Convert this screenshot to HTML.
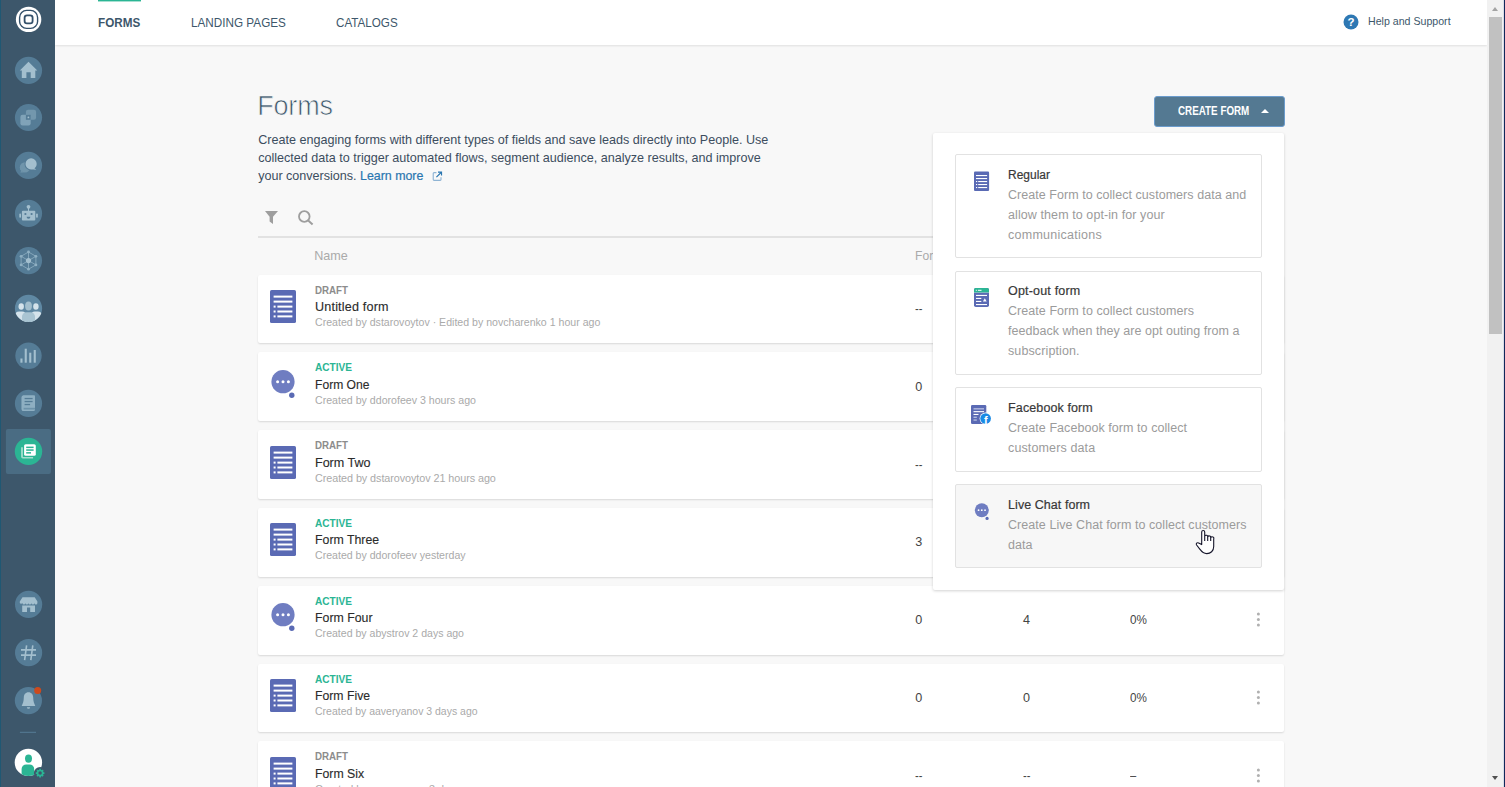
<!DOCTYPE html>
<html lang="en">
<head>
<meta charset="utf-8">
<title>Forms</title>
<style>
*{box-sizing:border-box;margin:0;padding:0}
html,body{width:1505px;height:787px;overflow:hidden;background:#f8f8f8;font-family:"Liberation Sans",sans-serif;color:#444}
body{position:relative}
.t{position:absolute;white-space:nowrap;line-height:normal;transform-origin:0 50%}
svg{position:absolute;overflow:visible}
#side{position:absolute;left:0;top:0;width:55px;height:787px;background:#3d576b;border-left:1px solid #1f5873}
#side svg{left:-1px;top:0}
#top{position:absolute;left:55px;top:0;width:1432px;height:45px;background:#fff;box-shadow:0 1px 2px rgba(0,0,0,.10)}
#tabline{position:absolute;left:43px;top:0;width:43px;height:2px;background:linear-gradient(#2bb594 0,#2bb594 50%,#a6e0d1 50%,#a6e0d1 100%)}
#sb{position:absolute;left:1487px;top:0;width:18px;height:787px;background:#f1f1f1;border-right:1px solid #11275a;box-shadow:inset -1px 0 0 #d9dce6}
#sb .th{position:absolute;left:2px;top:17px;width:13px;height:317px;background:#c1c1c1}
#sb .up,#sb .dn{position:absolute;left:4.8px;width:0;height:0;border-left:3.7px solid transparent;border-right:3.7px solid transparent}
#sb .up{top:7px;border-bottom:4px solid #a3a3a3}
#sb .dn{top:776px;border-top:4px solid #505050}
#main{position:absolute;left:0;top:0;width:1487px;height:787px}
#rule{position:absolute;left:258px;top:236px;width:1026px;height:2px;background:#e2e2e2}
.row{position:absolute;left:258px;width:1026px;height:68.7px;background:#fff;border-radius:2px;box-shadow:0 1px 2px rgba(0,0,0,.13)}
.kebab{left:996px;width:9px;height:17px}
#btn{position:absolute;left:1154px;top:96px;width:131px;height:31px;background:#547992;border:1px solid #6b9ccd;border-radius:3px}
#btn i{position:absolute;left:106px;top:11.7px;width:0;height:0;border-left:4px solid transparent;border-right:4px solid transparent;border-bottom:4px solid #fff}
#panel{position:absolute;left:933px;top:133px;width:351px;height:457px;background:#fff;border-radius:2px;box-shadow:0 1px 3px rgba(0,0,0,.18)}
.item{position:absolute;left:22px;width:307px;border:1px solid #e2e2e2;border-radius:2px;background:#fff}
.item.hov{background:#f7f7f7}
</style>
</head>
<body>
<svg width="0" height="0" style="left:-10px;top:-10px">
<defs>
<symbol id="doc" viewBox="0 0 26 33">
<rect x="0" y="0" width="26" height="33" rx="1.6" fill="#5a6ab4"/>
<g fill="#fff">
<rect x="3.6" y="5.6" width="18.8" height="2"/>
<rect x="3.6" y="10.6" width="18.8" height="2"/>
<rect x="3.6" y="15.6" width="2" height="2"/><rect x="7.4" y="15.6" width="15" height="2"/>
<rect x="3.6" y="20.5" width="2" height="2"/><rect x="7.4" y="20.5" width="15" height="2"/>
<rect x="3.6" y="25.4" width="2" height="2"/><rect x="7.4" y="25.4" width="15" height="2"/>
</g>
</symbol>
<symbol id="chat" viewBox="0 0 26 33">
<circle cx="13" cy="13.700" r="11.600" fill="#6f7dc1"/>
<circle cx="7.600" cy="13.700" r="1.500" fill="#fff"/><circle cx="13" cy="13.700" r="1.500" fill="#fff"/><circle cx="18.400" cy="13.700" r="1.500" fill="#fff"/>
<circle cx="21.800" cy="27.300" r="2.700" fill="#5a6ab4"/>
</symbol>
</defs>
</svg>

<div id="main">
<span class="t" style="left:257.2px;top:91.3px;font-size:27px;color:#3d576b;letter-spacing:-0.180px;-webkit-text-stroke:0.7px #f8f8f8;">Forms</span>
<span class="t" style="left:258.2px;top:132.7px;font-size:12.6px;color:#3c4d5e;letter-spacing:-0.007px;">Create engaging forms with different types of fields and save leads directly into People. Use</span>
<span class="t" style="left:258.2px;top:150.8px;font-size:12.6px;color:#3c4d5e;letter-spacing:-0.009px;">collected data to trigger automated flows, segment audience, analyze results, and improve</span>
<span class="t" style="left:258.2px;top:168.8px;font-size:12.6px;color:#3c4d5e;letter-spacing:-0.024px;">your conversions.</span>
<span class="t" style="left:360.3px;top:168.8px;font-size:12.6px;color:#2a76b0;transform:scaleX(0.9844);-webkit-text-stroke:0.2px #2a76b0;">Learn more</span>
<span class="t" style="left:314.3px;top:249.2px;font-size:12.6px;color:#aaaaaa;letter-spacing:-0.048px;">Name</span>
<span class="t" style="left:915.0px;top:249.2px;font-size:12.6px;color:#aaaaaa;transform:scaleX(0.9631);">Form views</span>
<svg width="16" height="16" viewBox="0 0 16 16" style="left:264px;top:210px"><path d="M1 1h13l-5 5.8v7.2l-3.4-2.6v-4.6z" fill="#9e9e9e"/></svg>
<svg width="18" height="18" viewBox="0 0 18 18" style="left:297px;top:209px"><circle cx="7.3" cy="7.5" r="5.3" fill="none" stroke="#9e9e9e" stroke-width="1.8"/><path d="M11.2 11.4l4.4 4" stroke="#9e9e9e" stroke-width="2" fill="none"/></svg>
<svg width="10.6" height="10.6" viewBox="0 0 12 12" style="left:431.6px;top:170.8px"><path d="M5 1.8H2.3a.9.9 0 0 0-.9.9v7a.9.9 0 0 0 .9.9h7a.9.9 0 0 0 .9-.9V7" fill="none" stroke="#8fb4d4" stroke-width="1.3"/><path d="M5 7l5.3-5.3M6.8 1.2h4v4" fill="none" stroke="#2a76b0" stroke-width="1.3"/></svg>
<div id="rule"></div>
<div class="row" style="top:275px;height:68px"><svg width="26" height="33" style="left:12px;top:15.0px"><use href="#doc"/></svg><span class="t" style="left:57.0px;top:9.0px;font-size:10.8px;color:#8c8c8c;font-weight:bold;transform:scaleX(0.9018);">DRAFT</span><span class="t" style="left:57.0px;top:25.0px;font-size:12.6px;color:#2b2b2b;letter-spacing:0.178px;-webkit-text-stroke:0.12px #2b2b2b;">Untitled form</span><span class="t" style="left:57.0px;top:41.0px;font-size:10.8px;color:#aaaaaa;transform:scaleX(0.9801);">Created by dstarovoytov · Edited by novcharenko 1 hour ago</span><span class="t" style="left:656.9px;top:27.0px;font-size:12.6px;color:#444;transform:scaleX(0.8819);">--</span><span class="t" style="left:764.6px;top:27.0px;font-size:12.6px;color:#444;transform:scaleX(0.8819);">--</span><span class="t" style="left:872.3px;top:27.0px;font-size:12.6px;color:#444;transform:scaleX(0.8819);">--</span><svg class="kebab" viewBox="0 0 9 17" style="top:25.0px"><g fill="#b0b0b0"><circle cx="4.400" cy="3" r="1.500"/><circle cx="4.400" cy="8.500" r="1.500"/><circle cx="4.400" cy="14" r="1.500"/></g></svg></div>
<div class="row" style="top:352px;height:69px"><svg width="26" height="33" style="left:12px;top:16.0px"><use href="#chat"/></svg><span class="t" style="left:57.0px;top:9.0px;font-size:10.8px;color:#2bb594;font-weight:bold;transform:scaleX(0.9345);">ACTIVE</span><span class="t" style="left:57.0px;top:26.0px;font-size:12.6px;color:#2b2b2b;transform:scaleX(0.9614);-webkit-text-stroke:0.12px #2b2b2b;">Form One</span><span class="t" style="left:57.0px;top:42.0px;font-size:10.8px;color:#aaaaaa;transform:scaleX(0.9825);">Created by ddorofeev 3 hours ago</span><span class="t" style="left:657.2px;top:28.0px;font-size:12.6px;color:#444;letter-spacing:-0.3px;">0</span><span class="t" style="left:764.9px;top:28.0px;font-size:12.6px;color:#444;letter-spacing:-0.3px;">1</span><span class="t" style="left:872.2px;top:28.0px;font-size:12.6px;color:#444;transform:scaleX(0.9284);">0%</span><svg class="kebab" viewBox="0 0 9 17" style="top:26.0px"><g fill="#b0b0b0"><circle cx="4.400" cy="3" r="1.500"/><circle cx="4.400" cy="8.500" r="1.500"/><circle cx="4.400" cy="14" r="1.500"/></g></svg></div>
<div class="row" style="top:430px;height:69px"><svg width="26" height="33" style="left:12px;top:16.0px"><use href="#doc"/></svg><span class="t" style="left:57.0px;top:9.0px;font-size:10.8px;color:#8c8c8c;font-weight:bold;transform:scaleX(0.9018);">DRAFT</span><span class="t" style="left:57.0px;top:26.0px;font-size:12.6px;color:#2b2b2b;letter-spacing:-0.044px;-webkit-text-stroke:0.12px #2b2b2b;">Form Two</span><span class="t" style="left:57.0px;top:42.0px;font-size:10.8px;color:#aaaaaa;letter-spacing:-0.063px;">Created by dstarovoytov 21 hours ago</span><span class="t" style="left:656.9px;top:28.0px;font-size:12.6px;color:#444;transform:scaleX(0.8819);">--</span><span class="t" style="left:764.6px;top:28.0px;font-size:12.6px;color:#444;transform:scaleX(0.8819);">--</span><span class="t" style="left:872.3px;top:28.0px;font-size:12.6px;color:#444;transform:scaleX(0.8819);">--</span><svg class="kebab" viewBox="0 0 9 17" style="top:26.0px"><g fill="#b0b0b0"><circle cx="4.400" cy="3" r="1.500"/><circle cx="4.400" cy="8.500" r="1.500"/><circle cx="4.400" cy="14" r="1.500"/></g></svg></div>
<div class="row" style="top:508px;height:69px"><svg width="26" height="33" style="left:12px;top:15.0px"><use href="#doc"/></svg><span class="t" style="left:57.0px;top:9.0px;font-size:10.8px;color:#2bb594;font-weight:bold;transform:scaleX(0.9345);">ACTIVE</span><span class="t" style="left:57.0px;top:25.0px;font-size:12.6px;color:#2b2b2b;transform:scaleX(0.9792);-webkit-text-stroke:0.12px #2b2b2b;">Form Three</span><span class="t" style="left:57.0px;top:41.0px;font-size:10.8px;color:#aaaaaa;transform:scaleX(0.9801);">Created by ddorofeev yesterday</span><span class="t" style="left:657.2px;top:27.0px;font-size:12.6px;color:#444;letter-spacing:-0.3px;">3</span><span class="t" style="left:764.9px;top:27.0px;font-size:12.6px;color:#444;letter-spacing:-0.3px;">12</span><span class="t" style="left:872.2px;top:27.0px;font-size:12.6px;color:#444;letter-spacing:0.594px;">25%</span><svg class="kebab" viewBox="0 0 9 17" style="top:25.0px"><g fill="#b0b0b0"><circle cx="4.400" cy="3" r="1.500"/><circle cx="4.400" cy="8.500" r="1.500"/><circle cx="4.400" cy="14" r="1.500"/></g></svg></div>
<div class="row" style="top:586px;height:69px"><svg width="26" height="33" style="left:12px;top:15.0px"><use href="#chat"/></svg><span class="t" style="left:57.0px;top:9.0px;font-size:10.8px;color:#2bb594;font-weight:bold;transform:scaleX(0.9345);">ACTIVE</span><span class="t" style="left:57.0px;top:25.0px;font-size:12.6px;color:#2b2b2b;transform:scaleX(0.9799);-webkit-text-stroke:0.12px #2b2b2b;">Form Four</span><span class="t" style="left:57.0px;top:41.0px;font-size:10.8px;color:#aaaaaa;transform:scaleX(0.9773);">Created by abystrov 2 days ago</span><span class="t" style="left:657.2px;top:27.0px;font-size:12.6px;color:#444;letter-spacing:-0.3px;">0</span><span class="t" style="left:764.9px;top:27.0px;font-size:12.6px;color:#444;letter-spacing:-0.3px;">4</span><span class="t" style="left:872.2px;top:27.0px;font-size:12.6px;color:#444;transform:scaleX(0.9284);">0%</span><svg class="kebab" viewBox="0 0 9 17" style="top:25.0px"><g fill="#b0b0b0"><circle cx="4.400" cy="3" r="1.500"/><circle cx="4.400" cy="8.500" r="1.500"/><circle cx="4.400" cy="14" r="1.500"/></g></svg></div>
<div class="row" style="top:664px;height:68px"><svg width="26" height="33" style="left:12px;top:15.0px"><use href="#doc"/></svg><span class="t" style="left:57.0px;top:9.0px;font-size:10.8px;color:#2bb594;font-weight:bold;transform:scaleX(0.9345);">ACTIVE</span><span class="t" style="left:57.0px;top:25.0px;font-size:12.6px;color:#2b2b2b;transform:scaleX(0.9723);-webkit-text-stroke:0.12px #2b2b2b;">Form Five</span><span class="t" style="left:57.0px;top:41.0px;font-size:10.8px;color:#aaaaaa;transform:scaleX(0.9709);">Created by aaveryanov 3 days ago</span><span class="t" style="left:657.2px;top:27.0px;font-size:12.6px;color:#444;letter-spacing:-0.3px;">0</span><span class="t" style="left:764.9px;top:27.0px;font-size:12.6px;color:#444;letter-spacing:-0.3px;">0</span><span class="t" style="left:872.2px;top:27.0px;font-size:12.6px;color:#444;transform:scaleX(0.9284);">0%</span><svg class="kebab" viewBox="0 0 9 17" style="top:25.0px"><g fill="#b0b0b0"><circle cx="4.400" cy="3" r="1.500"/><circle cx="4.400" cy="8.500" r="1.500"/><circle cx="4.400" cy="14" r="1.500"/></g></svg></div>
<div class="row" style="top:741px;height:69px"><svg width="26" height="33" style="left:12px;top:16.0px"><use href="#doc"/></svg><span class="t" style="left:57.0px;top:9.0px;font-size:10.8px;color:#8c8c8c;font-weight:bold;transform:scaleX(0.9018);">DRAFT</span><span class="t" style="left:57.0px;top:26.0px;font-size:12.6px;color:#2b2b2b;transform:scaleX(0.9767);-webkit-text-stroke:0.12px #2b2b2b;">Form Six</span><span class="t" style="left:57.0px;top:42.0px;font-size:10.8px;color:#aaaaaa;letter-spacing:-0.027px;">Created by aaveryanov 3 days ago</span><span class="t" style="left:656.9px;top:28.0px;font-size:12.6px;color:#444;transform:scaleX(0.8819);">--</span><span class="t" style="left:764.6px;top:28.0px;font-size:12.6px;color:#444;transform:scaleX(0.8819);">--</span><span class="t" style="left:872.2px;top:28.0px;font-size:12.6px;color:#444;transform:scaleX(0.8837);">–</span><svg class="kebab" viewBox="0 0 9 17" style="top:26.0px"><g fill="#b0b0b0"><circle cx="4.400" cy="3" r="1.500"/><circle cx="4.400" cy="8.500" r="1.500"/><circle cx="4.400" cy="14" r="1.500"/></g></svg></div>
</div>

<div id="btn"><span class="t" style="left:22.7px;top:6.6px;font-size:12px;color:#ffffff;font-weight:bold;transform:scaleX(0.8185);">CREATE FORM</span><i></i></div>
<div id="panel">
<div class="item" style="top:21.0px;height:104.0px"><svg width="16" height="21" viewBox="0 0 16 21" style="left:18px;top:16px"><rect x="0" y=".6" width="15.100" height="19.500" rx="1.100" fill="#5a6ab4"/><g fill="#fff"><rect x="2" y="4" width="11.100" height="1.100"/><rect x="2" y="7" width="11.100" height="1.100"/><rect x="2" y="10" width="1.200" height="1.100"/><rect x="4.200" y="10" width="8.900" height="1.100"/><rect x="2" y="13" width="1.200" height="1.100"/><rect x="4.200" y="13" width="8.900" height="1.100"/><rect x="2" y="16" width="1.200" height="1.100"/><rect x="4.200" y="16" width="8.900" height="1.100"/></g></svg><span class="t" style="left:52.1px;top:13.0px;font-size:12.5px;color:#383838;transform:scaleX(0.9593);-webkit-text-stroke:0.2px #383838;">Regular</span><span class="t" style="left:52.0px;top:33.0px;font-size:12.5px;color:#9b9b9b;letter-spacing:0.048px;">Create Form to collect customers data and</span><span class="t" style="left:52.0px;top:53.0px;font-size:12.5px;color:#9b9b9b;letter-spacing:0.088px;">allow them to opt-in for your</span><span class="t" style="left:52.0px;top:73.0px;font-size:12.5px;color:#9b9b9b;letter-spacing:0.262px;">communications</span></div>
<div class="item" style="top:138.0px;height:104.0px"><svg width="16" height="20" viewBox="0 0 16 20" style="left:18px;top:16.2px"><rect x="0" y="0" width="15" height="19" rx="1.800" fill="#5a6ab4"/><path d="M1.800 0h11.400a1.800 1.800 0 0 1 1.800 1.800v2.700h-15v-2.700a1.800 1.800 0 0 1 1.800-1.800z" fill="#2bb594"/><rect x="0" y="4.400" width="15" height=".6" fill="#9fd8cf"/><g fill="#fff"><rect x="1.800" y="1.800" width="1" height="1"/><rect x="3.900" y="1.800" width="3.600" height="1"/><rect x="2" y="6.900" width="11" height="1.100"/><rect x="2" y="9.900" width="5.300" height="1.100"/><rect x="2" y="12.900" width="5.300" height="1.100"/><rect x="2" y="16" width="11" height="1.100"/><path d="M10.800 10.300l1.900 3.300h-3.800z"/></g></svg><span class="t" style="left:52.1px;top:12.0px;font-size:12.5px;color:#383838;letter-spacing:0.177px;-webkit-text-stroke:0.2px #383838;">Opt-out form</span><span class="t" style="left:52.0px;top:32.0px;font-size:12.5px;color:#9b9b9b;letter-spacing:0.060px;">Create Form to collect customers</span><span class="t" style="left:52.0px;top:52.0px;font-size:12.5px;color:#9b9b9b;letter-spacing:0.037px;">feedback when they are opt outing from a</span><span class="t" style="left:52.0px;top:72.0px;font-size:12.5px;color:#9b9b9b;letter-spacing:0.116px;">subscription.</span></div>
<div class="item" style="top:254.0px;height:85.0px"><svg width="22" height="22" viewBox="0 0 22 22" style="left:15px;top:16.600px"><rect x="0" y="0" width="15.300" height="19" rx="1.300" fill="#5a6ab4"/><g fill="#fff"><rect x="2.500" y="3.300" width="10.500" height="1.100" fill="#c9cfea"/><rect x="2.500" y="6.100" width="10.500" height="1.100"/><rect x="2.500" y="8.900" width="5" height="1.100"/><rect x="2.500" y="11.700" width="3.300" height="1.100" fill="#c9cfea"/><rect x="2.500" y="14.500" width="3.300" height="1.100" fill="#c9cfea"/></g><circle cx="14.600" cy="13.500" r="6" fill="#fff"/><circle cx="14.600" cy="13.500" r="5.300" fill="#1a8ae5"/><text x="14.900" y="18.600" text-anchor="middle" font-family="Liberation Sans, sans-serif" font-weight="bold" font-size="11" fill="#fff">f</text></svg><span class="t" style="left:52.1px;top:13.0px;font-size:12.5px;color:#383838;letter-spacing:0.110px;-webkit-text-stroke:0.2px #383838;">Facebook form</span><span class="t" style="left:52.0px;top:33.0px;font-size:12.5px;color:#9b9b9b;letter-spacing:0.059px;">Create Facebook form to collect</span><span class="t" style="left:52.0px;top:53.0px;font-size:12.5px;color:#9b9b9b;letter-spacing:0.131px;">customers data</span></div>
<div class="item hov" style="top:351.0px;height:84.0px"><svg width="15.600" height="19.800" style="left:17.600px;top:16.800px"><use href="#chat"/></svg><span class="t" style="left:52.1px;top:13.0px;font-size:12.5px;color:#383838;letter-spacing:0.051px;-webkit-text-stroke:0.2px #383838;">Live Chat form</span><span class="t" style="left:52.0px;top:33.0px;font-size:12.5px;color:#9b9b9b;letter-spacing:0.055px;">Create Live Chat form to collect customers</span><span class="t" style="left:52.0px;top:53.0px;font-size:12.5px;color:#9b9b9b;letter-spacing:0.014px;">data</span></div>
</div>

<svg width="26" height="28" viewBox="0 0 26 28" style="left:1195px;top:529px"><path d="M6.7 15.600V3a1.500 1.500 0 0 1 3 0V7.200a1.500 1.200 0 0 1 3 .6a1.500 1.200 0 0 1 3 .8a1.500 1.200 0 0 1 3 1.200V17.500C18.700 22 15.500 24.600 11.800 24.600C8.500 24.600 6.500 22.500 4.800 20.200L1.600 16C.6 14.600 2 13.200 3.600 14z" fill="#fff" stroke="#15152a" stroke-width="1.100" stroke-linejoin="round"/><path d="M9.700 7.200V12M12.700 7.800V12M15.700 8.600V12" fill="none" stroke="#15152a" stroke-width="1.100"/></svg>

<div id="top">
<div id="tabline"></div>
<span class="t" style="left:43.4px;top:15.4px;font-size:13px;color:#3d576b;font-weight:bold;transform:scaleX(0.8988);">FORMS</span>
<span class="t" style="left:136.1px;top:15.4px;font-size:13px;color:#3d576b;transform:scaleX(0.9018);">LANDING PAGES</span>
<span class="t" style="left:281.0px;top:15.4px;font-size:13px;color:#3d576b;transform:scaleX(0.8958);">CATALOGS</span>
<span class="t" style="left:1313.3px;top:15.0px;font-size:11px;color:#3d576b;transform:scaleX(0.9647);">Help and Support</span>
<svg width="16" height="16" viewBox="0 0 16 16" style="left:1288px;top:13.7px"><circle cx="8" cy="8" r="7.5" fill="#2e78b3"/><text x="8" y="12" text-anchor="middle" font-family="Liberation Sans, sans-serif" font-weight="bold" font-size="11.5" fill="#fff">?</text></svg>
</div>

<div id="side">
<svg width="55" height="787" viewBox="0 0 55 787">
<!-- logo -->
<circle cx="28.6" cy="19.4" r="12.7" fill="#fff"/>
<rect x="19.6" y="10.4" width="18" height="18" rx="7" fill="none" stroke="#33506a" stroke-width="1.4"/>
<rect x="24.6" y="15.4" width="8" height="8" rx="2.4" fill="none" stroke="#33506a" stroke-width="1.8"/>
<g fill="#557c96">
<circle cx="28.5" cy="70.4" r="13.6"/><circle cx="28.5" cy="117.5" r="13.6"/><circle cx="28.5" cy="165.4" r="13.6"/><circle cx="28.5" cy="213.4" r="13.6"/><circle cx="28.5" cy="260.6" r="13.6"/><circle cx="28.5" cy="308.4" r="13.6" fill="#5f88a3"/><circle cx="28.5" cy="355.8" r="13.2"/><circle cx="28.5" cy="403.4" r="13.6"/><circle cx="28.6" cy="604.4" r="13.6"/><circle cx="28.6" cy="652.7" r="13.6"/><circle cx="28.4" cy="700.6" r="13.6"/>
</g>
<!-- home -->
<path d="M28.5 61.8l8.8 8.8h-2v7.4h-4.6v-5.7h-4.3v5.7h-4.6v-7.4h-2z" fill="#a3bfce"/>
<!-- layers -->
<rect x="25.9" y="109.8" width="10.2" height="10" rx="2.2" fill="#7397ad"/>
<rect x="20.4" y="114.8" width="10.3" height="10.7" rx="2.2" fill="#80a3b8"/>
<rect x="25.9" y="114.8" width="4.8" height="5" fill="#557c96"/>
<circle cx="28.4" cy="117.4" r=".9" fill="#a3bfce"/>
<!-- chat bubbles -->
<path d="M25.200 162.200a5.200 5.200 0 1 0 0 10.400h-5l1.200-2a5.200 5.200 0 0 1 3.800-8.400z" fill="#7095ab"/>
<circle cx="25" cy="167.400" r="5.200" fill="#7095ab"/>
<circle cx="31.100" cy="163.900" r="6.600" fill="#557c96"/>
<circle cx="31.100" cy="163.900" r="5.600" fill="#a3bfce"/>
<path d="M33.5 167.5l2.8 2.2-5-.4z" fill="#a3bfce"/>
<!-- robot -->
<circle cx="28.5" cy="206.8" r="1.9" fill="#a3bfce"/><rect x="28" y="207" width="1" height="4" fill="#a3bfce"/>
<rect x="21.9" y="210.8" width="13.4" height="9.6" rx="1" fill="#a3bfce"/>
<rect x="19.3" y="213.6" width="1.7" height="4.2" rx=".8" fill="#a3bfce"/><rect x="36.1" y="213.6" width="1.7" height="4.2" rx=".8" fill="#a3bfce"/>
<circle cx="25.4" cy="214" r="1.1" fill="#557c96"/><circle cx="31.6" cy="214" r="1.1" fill="#557c96"/>
<path d="M26.6 216.8h3.8a1.9 1.9 0 0 1-3.8 0z" fill="#557c96"/>
<!-- hex network -->
<g stroke="#8fb0c3" stroke-width=".8" fill="none"><path d="M28.5 252l7.4 4.3v8.6l-7.4 4.3-7.4-4.3v-8.6zM28.5 252v17.2M21.1 256.3l14.8 8.6M35.9 256.3l-14.8 8.6"/></g>
<g fill="#8fb0c3"><circle cx="28.5" cy="260.6" r="2.6" fill="#a3bfce"/><circle cx="28.5" cy="252" r="1.4"/><circle cx="35.9" cy="256.3" r="1.4"/><circle cx="35.9" cy="264.9" r="1.4"/><circle cx="28.5" cy="269.2" r="1.4"/><circle cx="21.1" cy="264.9" r="1.4"/><circle cx="21.1" cy="256.3" r="1.4"/></g>
<!-- people -->
<clipPath id="pc"><circle cx="28.5" cy="308.4" r="13.6"/></clipPath>
<g clip-path="url(#pc)">
<ellipse cx="21.2" cy="306.5" rx="2.7" ry="3.3" fill="#d5e3eb"/><ellipse cx="35.9" cy="306.5" rx="2.7" ry="3.3" fill="#d5e3eb"/>
<path d="M14.600 324v-8a4.500 4.500 0 0 1 4.500-4.500h3a4.500 4.500 0 0 1 4.500 4.500v8z" fill="#d5e3eb"/><path d="M30.400 324v-8a4.500 4.500 0 0 1 4.500-4.500h3a4.500 4.500 0 0 1 4.500 4.500v8z" fill="#d5e3eb"/>
<ellipse cx="28.5" cy="306" rx="3.4" ry="4.5" fill="#a3bfce"/>
<path d="M22 324v-7.200a4.600 4.600 0 0 1 4.600-4.600h3.800a4.600 4.600 0 0 1 4.600 4.600v7.200z" fill="#a9c4d2"/>
</g>
<!-- bars -->
<g fill="#a3bfce"><rect x="20.400" y="358.500" width="2.100" height="4.200"/><rect x="24.700" y="348.700" width="2.100" height="14"/><rect x="29.200" y="352.700" width="2.100" height="10"/><rect x="33.700" y="350" width="2.100" height="12.700"/></g>
<!-- book -->
<path d="M23.400 395.600h11.600v11.800h-11.200a1.900 1.900 0 0 0 0 3.600h11.200v0h-11.600a1.900 1.900 0 0 1-1.900-1.900v-11.600a1.900 1.900 0 0 1 1.900-1.900z" fill="#8eafc2"/>
<rect x="21.900" y="395.600" width="13.100" height="15.400" rx="1.500" fill="#8eafc2"/>
<rect x="23.600" y="407.800" width="11.400" height="1.700" fill="#6d93aa"/>
<g fill="#557c96"><rect x="24.600" y="397.900" width="8" height="1.300"/><rect x="24.600" y="400.900" width="8" height="1.300"/><rect x="24.600" y="403.900" width="5.500" height="1.300"/></g>
<!-- active -->
<rect x="5.900" y="428.900" width="45" height="45" rx="2" fill="#4a6c83"/>
<circle cx="28.500" cy="451.400" r="13.700" fill="#2bb594"/>
<path d="M21.100 447.300h1.800v9.600h10.200v1.700h-10.200a1.800 1.800 0 0 1-1.800-1.800z" fill="#a2dece"/>
<rect x="24.100" y="444.200" width="11.700" height="11.600" rx="1.600" fill="#fff"/>
<g fill="#2bb594"><rect x="26.200" y="446.600" width="7.400" height="1.500"/><rect x="26.200" y="449.300" width="7.400" height="1.500"/><rect x="26.200" y="452.100" width="4.800" height="1.500"/></g>
<!-- store -->
<path d="M22.500 597.200h12.200l2.700 4.400v1.300a1.500 1.500 0 0 1-3 0 1.500 1.500 0 0 1-3 0 1.500 1.500 0 0 1-3 0 1.500 1.500 0 0 1-3 0 1.500 1.500 0 0 1-3 0 1.500 1.500 0 0 1-2.600 0v-1.300z" fill="#a3bfce"/>
<path d="M22.200 605.400h12.800v6.600h-4.800v-4.400h-3.200v4.400h-4.800z" fill="#a3bfce"/>
<!-- hash -->
<g stroke="#a3bfce" stroke-width="1.600" fill="none"><path d="M21 649.900h15M21 655.100h15M26.600 645.400l-2 14.800M32.800 645.400l-2 14.800"/></g>
<!-- bell -->
<path d="M28.500 692.200c3 0 4.700 2.400 4.700 5.400 0 3.600.9 6 2.100 8.400h-13.600c1.200-2.400 2.100-4.800 2.100-8.400 0-3 1.700-5.400 4.700-5.400z" fill="#a3bfce"/>
<path d="M26.900 707.200h3.200a1.600 1.600 0 0 1-3.200 0z" fill="#a3bfce"/>
<circle cx="37.700" cy="690.400" r="3.500" fill="#cc4a1d"/>
<rect x="19.900" y="731.800" width="16.100" height="1" fill="#557c96"/>
<!-- avatar -->
<circle cx="28.400" cy="762.400" r="13.700" fill="#fff"/>
<clipPath id="ac"><circle cx="28.400" cy="762.400" r="13.700"/></clipPath>
<g clip-path="url(#ac)" fill="#2bb594"><ellipse cx="28.500" cy="758.600" rx="3.500" ry="4.200"/><path d="M21.600 778v-9a4.600 4.600 0 0 1 4.600-4.600h3.400a4.600 4.600 0 0 1 4.600 4.600v9z"/></g>
<circle cx="40.100" cy="773.100" r="6.200" fill="#3d576b"/>
<g transform="translate(40.100 773.100)"><circle r="2.600" fill="none" stroke="#2bb594" stroke-width="1.700"/><g stroke="#2bb594" stroke-width="1.700"><path d="M0-4.300v1.700M0 4.300v-1.700M-4.300 0h1.700M4.300 0h-1.700M-3-3l1.200 1.200M3 3l-1.200-1.200M-3 3l1.200-1.200M3-3l-1.200 1.200"/></g></g>
</svg>

</div>
<div id="sb"><div class="up"></div><div class="th"></div><div class="dn"></div></div>
</body>
</html>
